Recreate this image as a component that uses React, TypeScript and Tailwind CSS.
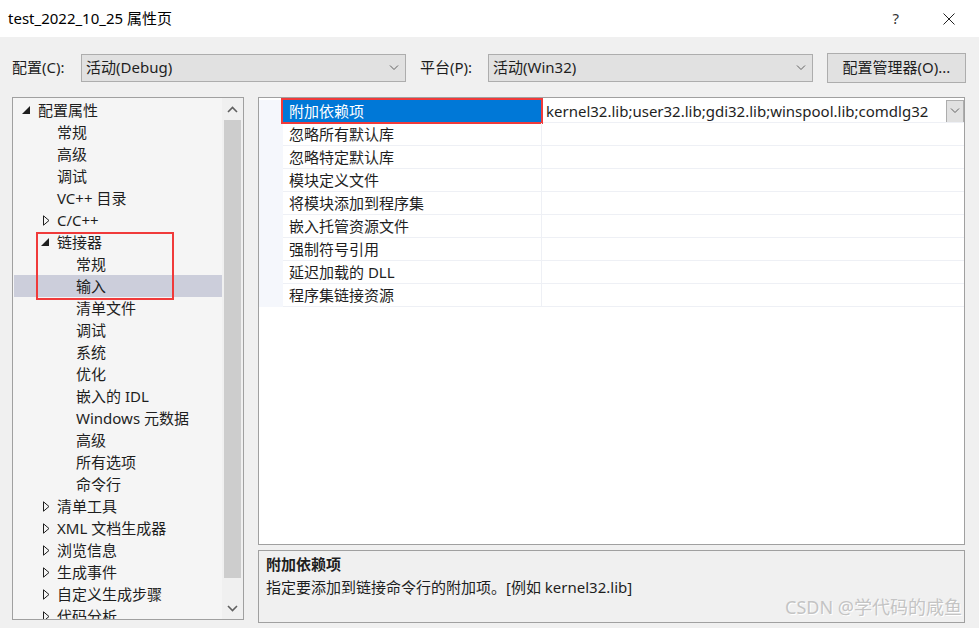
import React from "react";

type TreeNode = {
  label: string;
  level: 0 | 1 | 2;
  icon?: "open" | "closed";
  selected?: boolean;
};

const tree: TreeNode[] = [
  { label: "配置属性", level: 0, icon: "open" },
  { label: "常规", level: 1 },
  { label: "高级", level: 1 },
  { label: "调试", level: 1 },
  { label: "VC++ 目录", level: 1 },
  { label: "C/C++", level: 1, icon: "closed" },
  { label: "链接器", level: 1, icon: "open" },
  { label: "常规", level: 2 },
  { label: "输入", level: 2, selected: true },
  { label: "清单文件", level: 2 },
  { label: "调试", level: 2 },
  { label: "系统", level: 2 },
  { label: "优化", level: 2 },
  { label: "嵌入的 IDL", level: 2 },
  { label: "Windows 元数据", level: 2 },
  { label: "高级", level: 2 },
  { label: "所有选项", level: 2 },
  { label: "命令行", level: 2 },
  { label: "清单工具", level: 1, icon: "closed" },
  { label: "XML 文档生成器", level: 1, icon: "closed" },
  { label: "浏览信息", level: 1, icon: "closed" },
  { label: "生成事件", level: 1, icon: "closed" },
  { label: "自定义生成步骤", level: 1, icon: "closed" },
  { label: "代码分析", level: 1, icon: "closed" },
];

const props = [
  "附加依赖项",
  "忽略所有默认库",
  "忽略特定默认库",
  "模块定义文件",
  "将模块添加到程序集",
  "嵌入托管资源文件",
  "强制符号引用",
  "延迟加载的 DLL",
  "程序集链接资源",
];

function Chevron({ className = "" }: { className?: string }) {
  return (
    <svg width="10" height="6" viewBox="0 0 10 6" className={className}>
      <path d="M1 0.5 L5 4.5 L9 0.5" fill="none" stroke="#606060" strokeWidth="1" />
    </svg>
  );
}

function Select({ value, width }: { value: string; width: string }) {
  return (
    <div className={`${width} h-[28px] bg-[#e1e1e1] border border-[#adadad] flex items-center justify-between pl-[4px] pr-[6px]`}>
      <span>{value}</span>
      <Chevron />
    </div>
  );
}

function TreeIcon({ icon }: { icon?: "open" | "closed" }) {
  if (icon === "open")
    return (
      <svg width="8" height="8" viewBox="0 0 8 8">
        <path d="M8 0 L8 8 L0 8 Z" fill="#1e1e1e" />
      </svg>
    );
  if (icon === "closed")
    return (
      <svg width="7" height="11" viewBox="0 0 7 11" className="ml-[2px]">
        <path d="M0.5 0.8 L6 5.5 L0.5 10.2 Z" fill="none" stroke="#1e1e1e" strokeWidth="1" />
      </svg>
    );
  return null;
}

function TreeRow({ node }: { node: TreeNode }) {
  const indent =
    node.level === 0 ? "pl-[8px]" : node.level === 1 ? "pl-[27px]" : "pl-[46px]";
  return (
    <div className={`h-[22px] flex items-center ${indent} ${node.selected ? "bg-[#cccedb]" : ""}`}>
      <div className="w-[16px] shrink-0 flex items-center justify-start">
        <TreeIcon icon={node.icon} />
      </div>
      <span className="whitespace-nowrap">{node.label}</span>
    </div>
  );
}

export default function App() {
  return (
    <div className="w-[979px] h-[628px] overflow-hidden bg-[#f0f0f0] text-[15px] text-[#1e1e1e] font-['Noto_Sans','Noto_Sans_CJK_SC',sans-serif] flex flex-col">
      {/* title bar */}
      <div className="h-[37px] bg-white flex items-center justify-between pl-[8px] pr-[24px] shrink-0">
        <span className="text-[15px] text-black">test_2022_10_25 属性页</span>
        <div className="flex items-center gap-[44px]">
          <span className="text-[15px] text-[#333]">?</span>
          <svg width="12" height="12" viewBox="0 0 12 12">
            <path d="M0.5 0.5 L11.5 11.5 M11.5 0.5 L0.5 11.5" stroke="#222" strokeWidth="1" />
          </svg>
        </div>
      </div>

      {/* toolbar */}
      <div className="h-[60px] shrink-0 flex items-center pl-[12px] pt-[1px]">
        <span className="w-[69px] whitespace-nowrap">配置(C):</span>
        <Select value="活动(Debug)" width="w-[325px]" />
        <span className="ml-[14px] w-[68px] whitespace-nowrap">平台(P):</span>
        <Select value="活动(Win32)" width="w-[325px]" />
        <button className="ml-[14px] w-[139px] h-[30px] bg-[#e1e1e1] border border-[#adadad] text-[15px]">
          配置管理器(O)...
        </button>
      </div>

      {/* main */}
      <div className="flex pl-[12px] gap-[14px]">
        {/* tree */}
        <div className="relative w-[232px] h-[523px] shrink-0 bg-[#f5f5f5] border border-[#a0a0a0] flex overflow-hidden">
          <div className="flex-1 pt-[1px] pl-[1px] overflow-hidden">
            {tree.map((n, i) => (
              <TreeRow key={i} node={n} />
            ))}
          </div>
          <div className="w-[21px] shrink-0 bg-[#f0f0f0] flex flex-col items-center">
            <div className="h-[22px] flex items-center justify-center">
              <svg width="11" height="7" viewBox="0 0 11 7">
                <path d="M1 6 L5.5 1.5 L10 6" fill="none" stroke="#606060" strokeWidth="1.6" />
              </svg>
            </div>
            <div className="w-[17px] h-[458px] bg-[#cdcdcd]" />
            <div className="flex-1 flex items-end pb-[7px]">
              <svg width="11" height="7" viewBox="0 0 11 7">
                <path d="M1 1 L5.5 5.5 L10 1" fill="none" stroke="#606060" strokeWidth="1.6" />
              </svg>
            </div>
          </div>
          <div className="absolute left-[23px] top-[134px] w-[138px] h-[68px] border-2 border-[#f03a3a]" />
        </div>

        {/* right side */}
        <div className="w-[707px] shrink-0 flex flex-col gap-[5px]">
          <div className="h-[448px] bg-white border border-[#a0a0a0] pt-[2px]">
            {props.map((p, i) => (
              <div key={p} className="h-[23px] flex">
                <div className="w-[24px] shrink-0 bg-[#f5f7fc]" />
                <div className="flex-1 min-w-0 flex border-b border-[#eef0f5]">
                  <div
                    className={`relative w-[259px] shrink-0 flex items-center pl-[6px] border-r border-[#eef0f5] ${
                      i === 0 ? "bg-[#0078d7] text-white" : ""
                    }`}
                  >
                    <span className="whitespace-nowrap">{p}</span>
                    {i === 0 && (
                      <div className="absolute -left-[2px] -top-[2px] -right-[2px] -bottom-[2px] border-2 border-[#f03a3a]" />
                    )}
                  </div>
                  <div className="flex-1 min-w-0 flex items-center overflow-hidden">
                    {i === 0 && (
                      <>
                        <span className="flex-1 min-w-0 pl-[4px] whitespace-nowrap overflow-hidden">
                          kernel32.lib;user32.lib;gdi32.lib;winspool.lib;comdlg32
                        </span>
                        <div className="w-[18px] h-[23px] shrink-0 bg-[#e1e1e1] border border-[#adadad] flex items-center justify-center">
                          <Chevron />
                        </div>
                      </>
                    )}
                  </div>
                </div>
              </div>
            ))}
          </div>

          <div className="relative h-[73px] border border-[#a0a0a0] bg-[#f0f0f0] pl-[7px] pt-[2px]">
            <div className="font-bold leading-[22px]">附加依赖项</div>
            <div className="leading-[24px]">指定要添加到链接命令行的附加项。[例如 kernel32.lib]</div>
            <div className="absolute right-[2px] bottom-[1px] text-[18px] text-[#c4c4c4] [text-shadow:1px_1px_0_#ffffff]">
              CSDN @学代码的咸鱼
            </div>
          </div>
        </div>
      </div>
    </div>
  );
}
